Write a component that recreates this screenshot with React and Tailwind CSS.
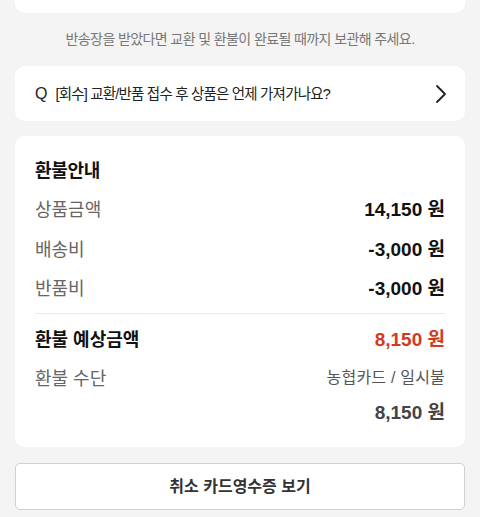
export default function App() {
  const font = { fontFamily: '"Liberation Sans", "Noto Sans CJK KR", sans-serif' };
  return (
    <div className="w-[480px] h-[517px] overflow-hidden bg-[#f4f4f4] px-[15px]" style={font}>
      <div className="h-[13px] bg-white rounded-b-[10px]" />
      <div className="h-[53px] flex items-center justify-center text-[14px] text-[#777] tracking-[-0.6px]">
        반송장을 받았다면 교환 및 환불이 완료될 때까지 보관해 주세요.
      </div>
      <div className="h-[55px] bg-white rounded-[10px] flex items-center justify-between pl-[20px] pr-[18px]">
        <div className="text-[14.5px] text-[#222] tracking-[-0.8px]">
          <span className="text-[16px] mr-[8px] tracking-normal">Q</span>[회수] 교환/반품 접수 후 상품은 언제 가져가나요?
        </div>
        <svg width="12" height="20" viewBox="0 0 12 20" fill="none" stroke="#222" strokeWidth="1.8" strokeLinecap="round" strokeLinejoin="round">
          <path d="M2 2 L10 10 L2 18" />
        </svg>
      </div>
      <div className="mt-[15px] h-[311px] bg-white rounded-[10px] px-[20px] pt-[24px]">
        <div className="h-[22px] flex items-center text-[18px] font-bold text-[#111] tracking-[-0.3px]">환불안내</div>
        <div className="mt-[8px]">
          {[
            ["상품금액", "14,150 원"],
            ["배송비", "-3,000 원"],
            ["반품비", "-3,000 원"],
          ].map(([l, v], i) => (
            <div key={i} className={`h-[40px] flex items-center justify-between ${i === 2 ? "-mt-[1px]" : ""}`}>
              <span className="text-[18px] text-[#666]">{l}</span>
              <span className="text-[19px] font-bold text-[#111]">{v}</span>
            </div>
          ))}
        </div>
        <div className="mt-[4px] h-px bg-[#eaeaea]" />
        <div className="mt-[6px] h-[40px] flex items-center justify-between">
          <span className="text-[18px] font-bold text-[#111]">환불 예상금액</span>
          <span className="text-[19px] font-bold text-[#d23a1f]">8,150 원</span>
        </div>
        <div className="h-[36px] flex items-center justify-between">
          <span className="text-[18px] text-[#666] mt-[2px]">환불 수단</span>
          <span className="text-[16px] text-[#555] tracking-[0.2px]">농협카드 / 일시불</span>
        </div>
        <div className="h-[34px] flex items-center justify-end">
          <span className="text-[19px] font-bold text-[#444]">8,150 원</span>
        </div>
      </div>
      <div className="mt-[16px] h-[47px] bg-white border border-[#cfcfcf] rounded-[5px] flex items-center justify-center text-[16px] font-bold text-[#333]">
        취소 카드영수증 보기
      </div>
    </div>
  );
}
